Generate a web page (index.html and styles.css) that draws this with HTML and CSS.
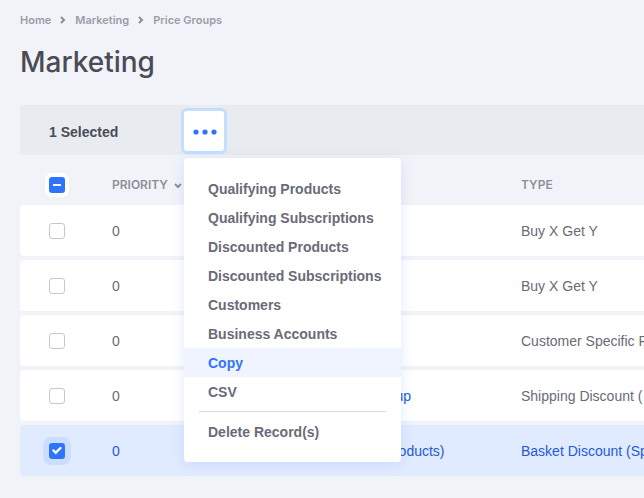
FILE: index.html
```html
<!DOCTYPE html>
<html lang="en">
<head>
<meta charset="utf-8">
<title>Marketing</title>
<link rel="stylesheet" href="styles.css">
</head>
<body>
<main class="page">
  <nav class="breadcrumb" aria-label="Breadcrumb">
    <a href="#">Home</a>
    <svg class="crumb-arrow" viewBox="0 0 6 8"><path d="M1 1l3 3-3 3"/></svg>
    <a href="#">Marketing</a>
    <svg class="crumb-arrow" viewBox="0 0 6 8"><path d="M1 1l3 3-3 3"/></svg>
    <a href="#">Price Groups</a>
  </nav>
  <h1 class="title">Marketing</h1>
  <section class="toolbar">
    <span class="selected-count">1 Selected</span>
    <div class="actions">
      <button class="more" type="button" aria-label="Actions" aria-expanded="true">
        <svg class="dots" viewBox="0 0 24 6"><circle cx="3" cy="3" r="2.6"/><circle cx="12" cy="3" r="2.6"/><circle cx="21" cy="3" r="2.6"/></svg>
      </button>
      <div class="menu">
        <button class="item" type="button">Qualifying Products</button>
        <button class="item" type="button">Qualifying Subscriptions</button>
        <button class="item" type="button">Discounted Products</button>
        <button class="item" type="button">Discounted Subscriptions</button>
        <button class="item" type="button">Customers</button>
        <button class="item" type="button">Business Accounts</button>
        <button class="item active" type="button">Copy</button>
        <button class="item" type="button">CSV</button>
        <hr class="divider">
        <button class="item" type="button">Delete Record(s)</button>
      </div>
    </div>
  </section>
  <table class="records">
    <thead>
      <tr>
        <th class="col-check"><input class="check all" type="checkbox" aria-label="Select all"></th>
        <th class="col-priority">Priority<svg class="sort" viewBox="0 0 8 6"><path d="M1 1l3 3 3-3"/></svg></th>
        <th class="col-name"></th>
        <th class="col-type">Type</th>
      </tr>
    </thead>
    <tbody>
      <tr><td><input class="check" type="checkbox" aria-label="Select record"></td><td>0</td><td></td><td>Buy X Get Y</td></tr>
      <tr><td><input class="check" type="checkbox" aria-label="Select record"></td><td>0</td><td></td><td>Buy X Get Y</td></tr>
      <tr><td><input class="check" type="checkbox" aria-label="Select record"></td><td>0</td><td></td><td>Customer Specific Price</td></tr>
      <tr><td><input class="check" type="checkbox" aria-label="Select record"></td><td>0</td><td><a href="#">Shipping Discount User Group</a></td><td>Shipping Discount (</td></tr>
      <tr class="chosen"><td><input class="check" type="checkbox" aria-label="Select record" checked></td><td>0</td><td><a href="#">Basket Discount (Specific Products)</a></td><td>Basket Discount (Specific Products)</td></tr>
    </tbody>
  </table>
</main>
</body>
</html>
```
FILE: styles.css
```css
* { box-sizing: border-box; }
body {
  margin: 0;
  background: #f2f3f8;
  color: #6a6b78;
  font: 14px/20px "Liberation Sans", Arial, sans-serif;
}
a { color: inherit; text-decoration: none; }
button { font: inherit; border: 0; cursor: pointer; }
.page { padding: 10px 0 22px 20px; overflow-x: clip; }

.breadcrumb {
  display: flex;
  align-items: center;
  font: 600 11px/20px Inter, sans-serif;
  color: #989dab;
}
.crumb-arrow {
  width: 6px;
  height: 8px;
  margin: 0 9px;
  fill: none;
  stroke: #8b8f9c;
  stroke-width: 2;
}
.title {
  margin: 12px 0 23px;
  color: #4a4b57;
  font: 500 28px/40px Inter, sans-serif;
}

.toolbar {
  display: flex;
  align-items: center;
  height: 50px;
  padding: 2px 0 0 29px;
  background: #e8ebf0;
  border-radius: 4px 0 0 0;
}
.selected-count {
  width: 135px;
  padding-top: 2px;
  color: #4a4b57;
  font-weight: 700;
}
.actions { position: relative; }
.more {
  display: grid;
  place-items: center;
  width: 40px;
  height: 40px;
  padding: 1px 0 0 1px;
  background: #fff;
  border-radius: 3px;
  box-shadow: 0 0 0 3px #c5deff;
}
.dots { width: 24px; height: 6px; fill: #2f74ff; }

.menu {
  position: absolute;
  z-index: 2;
  top: 47px;
  left: 0;
  width: 217px;
  padding: 16px 0;
  background: #fff;
  border-radius: 4px;
  box-shadow: 0 2px 14px rgba(47, 116, 255, 0.14);
}
.item {
  display: block;
  width: 100%;
  padding: 5px 24px 4px;
  background: none;
  color: #6a6b78;
  font-weight: 700;
  text-align: left;
  white-space: nowrap;
}
.item.active { background: #f0f4ff; color: #2f74ff; }
.divider {
  height: 1px;
  margin: 5px 15px;
  border: 0;
  background: #dcdde0;
}

.records {
  width: calc(100% + 60px);
  min-width: 684px;
  table-layout: fixed;
  border-spacing: 0 4px;
  margin-top: -4px;
}
th, td { padding: 0; text-align: left; white-space: nowrap; }
th {
  height: 46px;
  padding-top: 14px;
  color: #8b8f9c;
  font: 600 12px/16px Inter, sans-serif;
  text-transform: uppercase;
}
td { height: 51px; background: #fff; }
td:first-child { border-radius: 4px 0 0 4px; }
th:first-child, td:first-child { padding-left: 29px; }
td:nth-child(3) { padding-left: 3px; }
.col-check { width: 92px; }
.col-priority { width: 107px; }
.col-name { width: 302px; }
td a { color: #2459d9; }
.chosen td { background: #e1ebff; color: #2459d9; }
.sort {
  width: 8px;
  height: 6px;
  margin-left: 6px;
  fill: none;
  stroke: #8b8f9c;
  stroke-width: 2;
}

.check {
  appearance: none;
  display: grid;
  place-items: center;
  width: 16px;
  height: 16px;
  margin: 0;
  background: #fff;
  border: 1px solid #c5c7d6;
  border-radius: 3px;
}
.check.all, .check:checked { border: 0; background: #2f74ff; }
.check.all { box-shadow: 0 0 0 4px #fff; }
.check.all::after {
  content: "";
  width: 8px;
  height: 2px;
  background: #fff;
}
.check:checked { box-shadow: 0 0 0 6px #ccddfd; }
.check:checked::after {
  content: "";
  width: 10px;
  height: 8px;
  background: #fff;
  clip-path: polygon(0 50%, 15% 31%, 37% 57%, 85% 0, 100% 18%, 37% 100%);
}
```
